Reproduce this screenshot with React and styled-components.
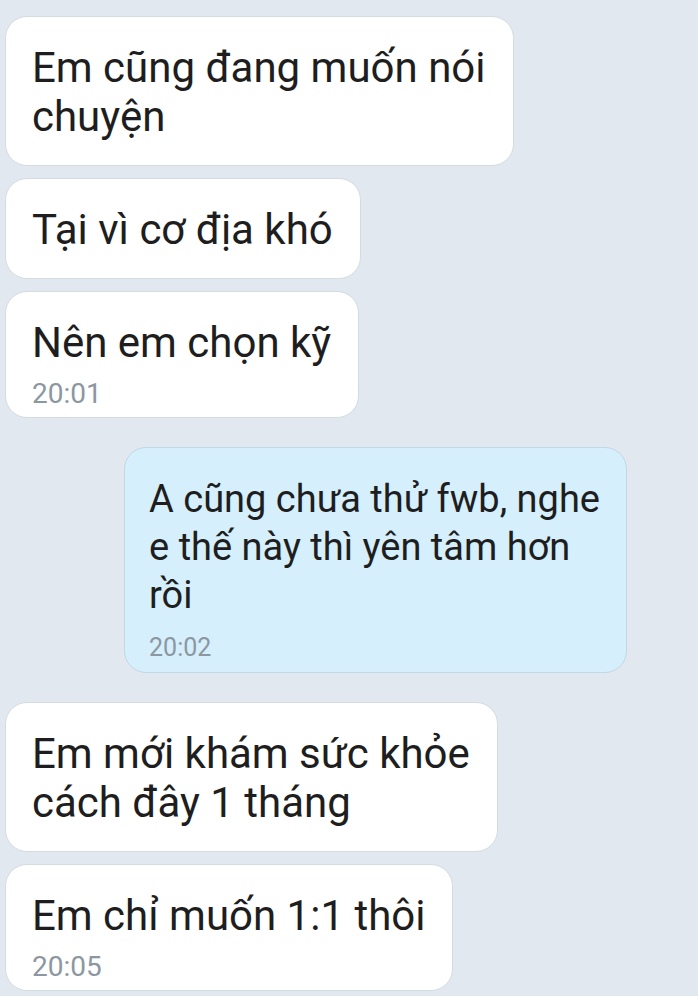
import React from "react";
import styled, { createGlobalStyle } from "styled-components";

const Global = createGlobalStyle`
  html, body { margin: 0; padding: 0; background: #e2e8f0; }
  body { font-family: Roboto, "Noto Sans", sans-serif; }
`;

const Screen = styled.div`
  width: 698px;
  height: 996px;
  overflow: hidden;
  box-sizing: border-box;
  padding: 16px 71px 0 5px;
  display: flex;
  flex-direction: column;
  gap: 29px;
  background: #e2e8f0;
`;

const Group = styled.div`
  display: flex;
  flex-direction: column;
  align-items: ${(p) => (p.$mine ? "flex-end" : "flex-start")};
  gap: 12px;
`;

const Bubble = styled.div`
  box-sizing: border-box;
  padding: ${(p) =>
    p.$mine
      ? `27px 26px ${p.$hasTime ? "12px" : "24px"} 24px`
      : `26px 27px ${p.$hasTime ? "9px" : "24px"} 26px`};
  border-radius: 22px;
  background: ${(p) => (p.$mine ? "#d5effd" : "#ffffff")};
  border: 1px solid ${(p) => (p.$mine ? "#c3d7e4" : "#d5dbe2")};
  color: #1e1e20;
`;

const Text = styled.div`
  font-size: ${(p) => (p.$mine ? "38px" : "42px")};
  line-height: ${(p) => (p.$mine ? "48px" : "49px")};
  white-space: nowrap;
`;

const Time = styled.div`
  margin-top: ${(p) => (p.$mine ? "16px" : "13px")};
  font-size: ${(p) => (p.$mine ? "25px" : "28px")};
  line-height: ${(p) => (p.$mine ? "25px" : "28px")};
  color: #8c97a1;
`;

const groups = [
  {
    mine: false,
    messages: [
      { lines: ["Em cũng đang muốn nói", "chuyện"] },
      { lines: ["Tại vì cơ địa khó"] },
      { lines: ["Nên em chọn kỹ"], time: "20:01" },
    ],
  },
  {
    mine: true,
    messages: [
      { lines: ["A cũng chưa thử fwb, nghe", "e thế này thì yên tâm hơn", "rồi"], time: "20:02" },
    ],
  },
  {
    mine: false,
    messages: [
      { lines: ["Em mới khám sức khỏe", "cách đây 1 tháng"] },
      { lines: ["Em chỉ muốn 1:1 thôi"], time: "20:05" },
    ],
  },
];

export default function App() {
  return (
    <>
      <Global />
      <Screen>
        {groups.map((g, gi) => (
          <Group key={gi} $mine={g.mine}>
            {g.messages.map((m, i) => (
              <Bubble key={i} $mine={g.mine} $hasTime={!!m.time}>
                <Text $mine={g.mine}>
                  {m.lines.map((l, li) => (
                    <React.Fragment key={li}>
                      {li > 0 && <br />}
                      {l}
                    </React.Fragment>
                  ))}
                </Text>
                {m.time && <Time $mine={g.mine}>{m.time}</Time>}
              </Bubble>
            ))}
          </Group>
        ))}
      </Screen>
    </>
  );
}
